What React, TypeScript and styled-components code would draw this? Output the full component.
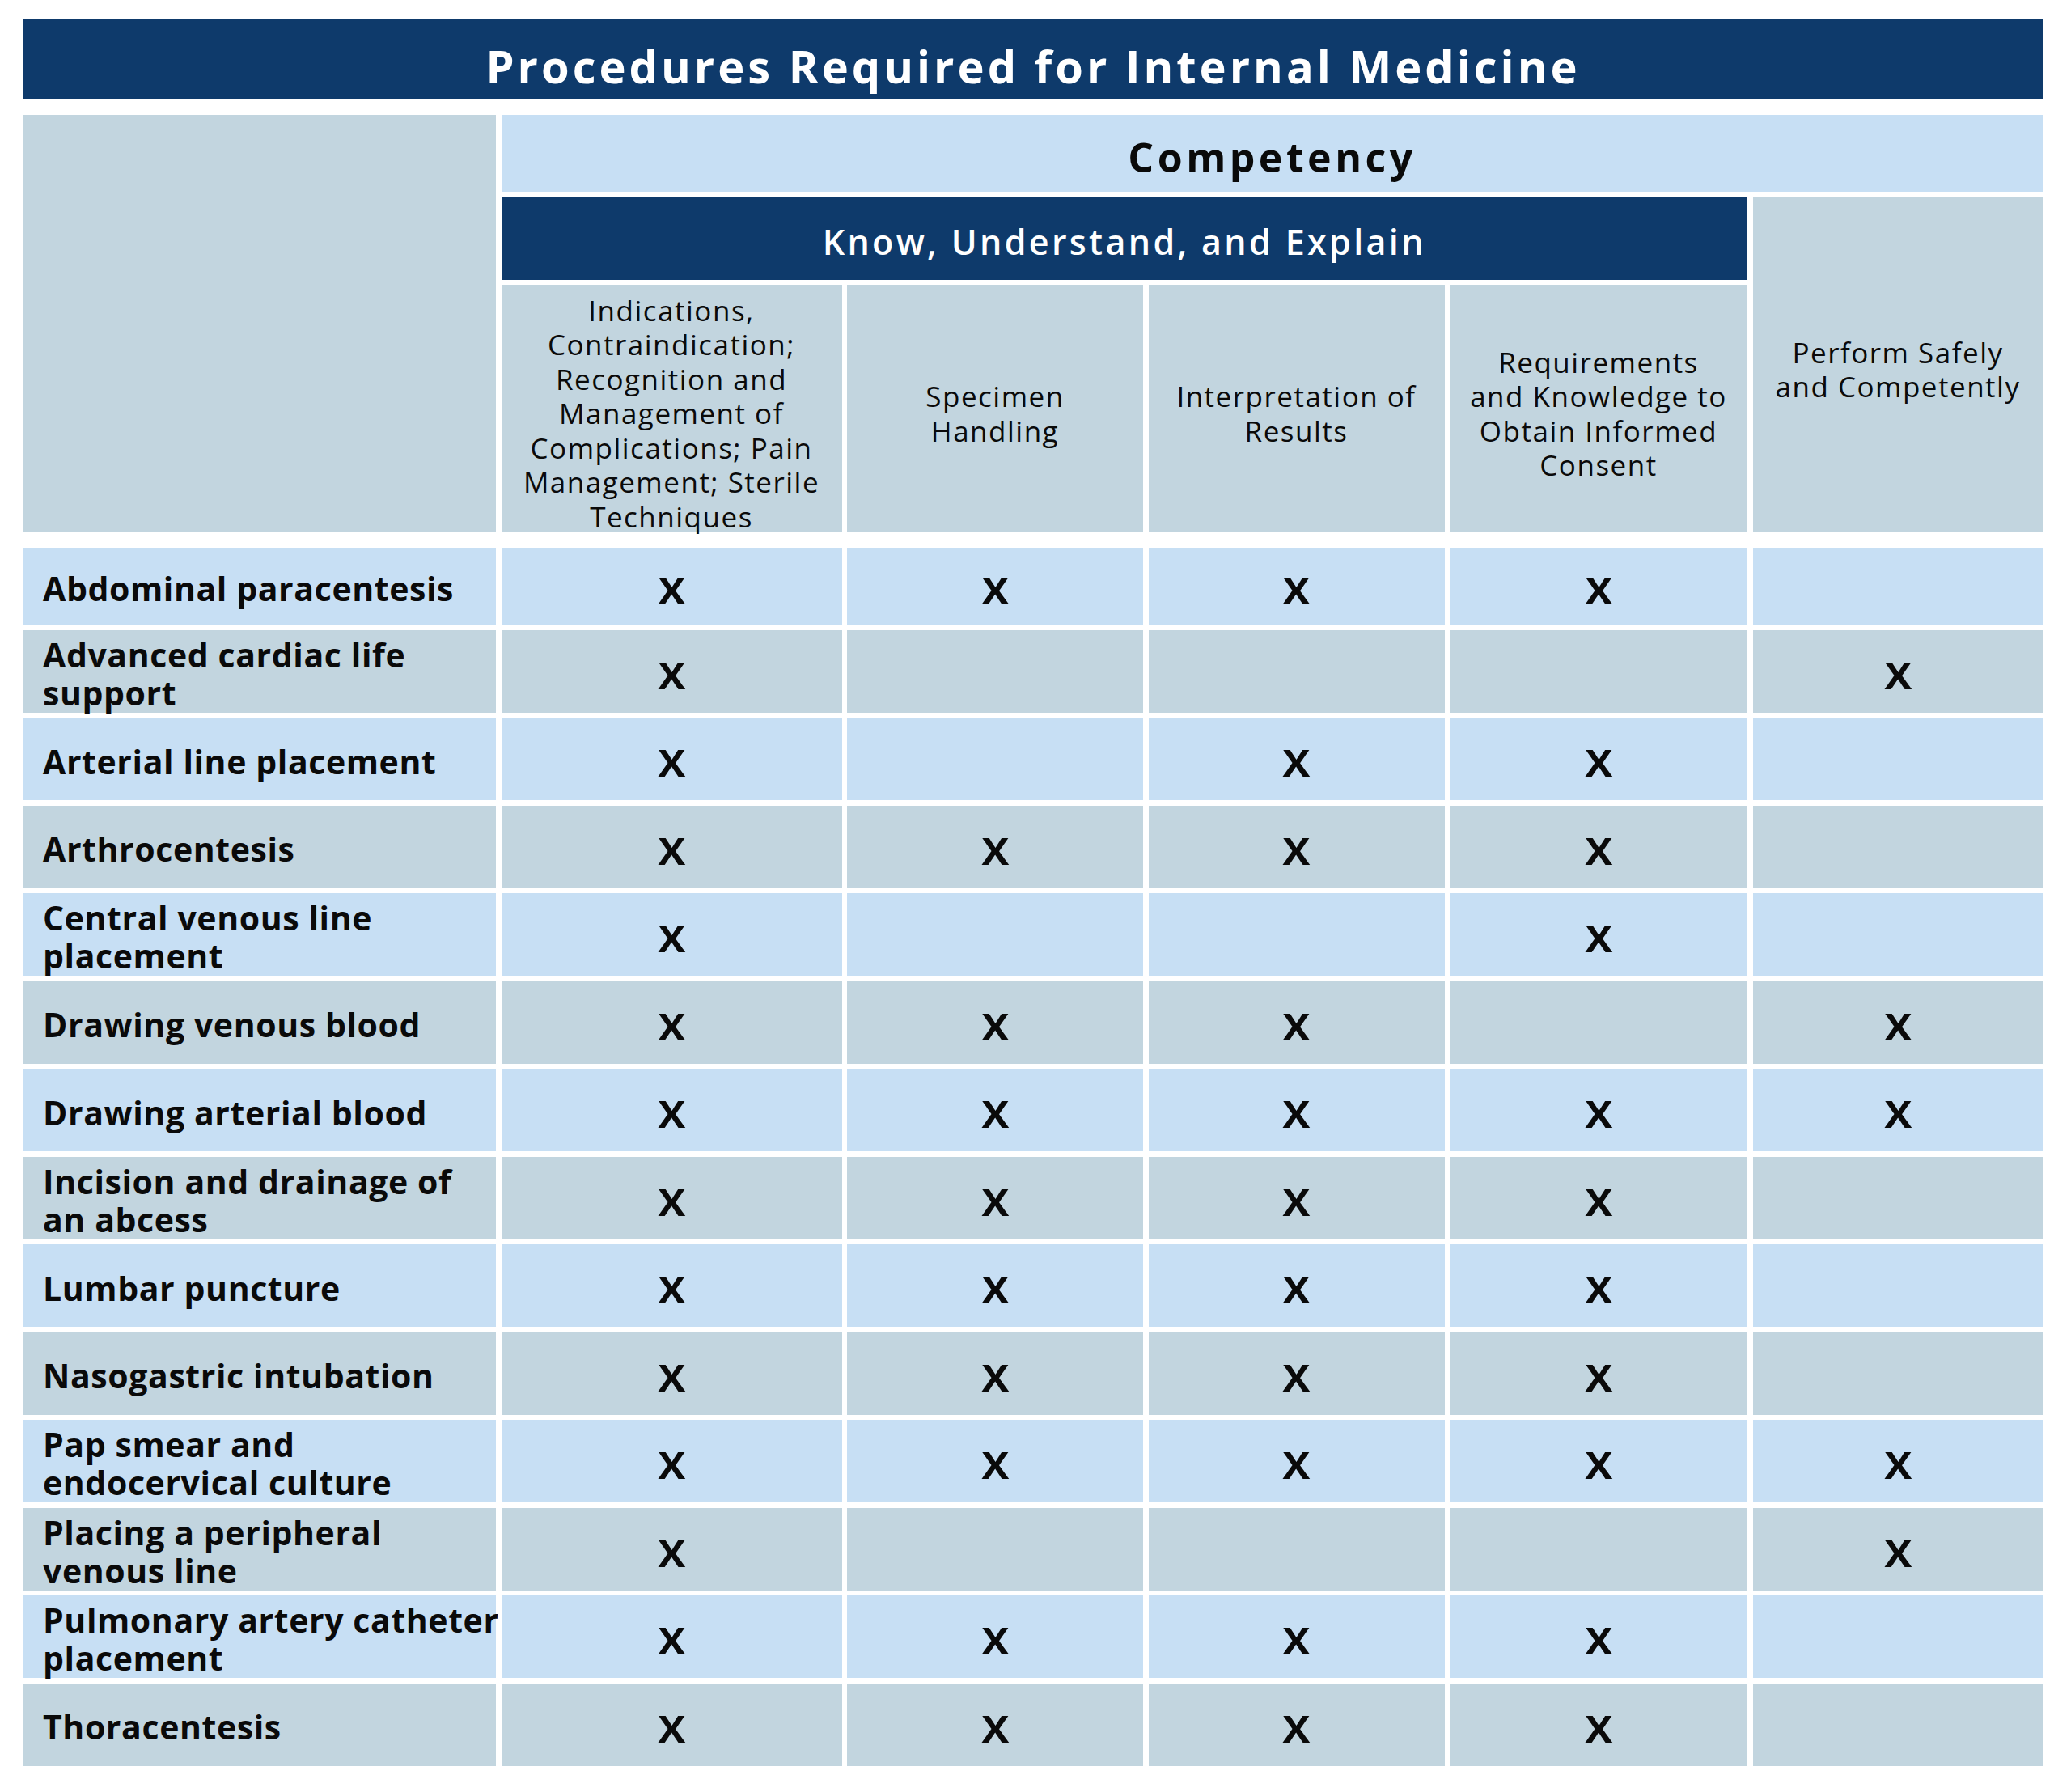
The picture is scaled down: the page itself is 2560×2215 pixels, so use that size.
import React from "react";
import styled, { createGlobalStyle, css } from "styled-components";

const NAVY = "#0e3a6b";
const LIGHT = "#c7dff4";
const GRAY = "#c2d5df";

const Global = createGlobalStyle`
  html, body { margin: 0; padding: 0; background: #ffffff; }
  body { font-family: "Open Sans", Lato, sans-serif; color: #0a0a0a; }
`;

const columns = css`
  display: grid;
  grid-template-columns: 584px 421px 366px 366px 368px 359px;
  column-gap: 6.5px;
`;

const Page = styled.div`
  width: 2560px;
  height: 2215px;
  box-sizing: border-box;
  padding: 24px 34px 0 28px;
  display: flex;
  flex-direction: column;
`;

const TitleBar = styled.h1`
  margin: 0;
  height: 98px;
  box-sizing: border-box;
  padding-top: 24px;
  background: ${NAVY};
  color: #ffffff;
  font-size: 56px;
  line-height: 67px;
  font-weight: 700;
  text-align: center;
  letter-spacing: 4px;
`;

const Header = styled.div`
  ${columns};
  margin: 20px 0 0 1px;
  grid-template-rows: 95px 103px 306px;
  row-gap: 6px;
`;

const Corner = styled.div`
  grid-column: 1;
  grid-row: 1 / 4;
  background: ${GRAY};
`;

const CompetencyCell = styled.div`
  grid-column: 2 / 7;
  grid-row: 1;
  background: ${LIGHT};
  box-sizing: border-box;
  padding-top: 22px;
  font-size: 50px;
  line-height: 60px;
  font-weight: 700;
  text-align: center;
  letter-spacing: 4.5px;
`;

const KnowCell = styled.div`
  grid-column: 2 / 6;
  grid-row: 2;
  background: ${NAVY};
  color: #ffffff;
  box-sizing: border-box;
  padding-top: 29px;
  font-size: 43px;
  line-height: 53px;
  font-weight: 600;
  text-align: center;
  letter-spacing: 3.35px;
`;

const SubHead = styled.div<{ $col: number; $span?: boolean }>`
  grid-column: ${(p) => p.$col};
  grid-row: ${(p) => (p.$span ? "2 / 4" : "3")};
  background: ${GRAY};
  display: flex;
  align-items: center;
  justify-content: center;
  padding-top: 13px;
  box-sizing: border-box;
  text-align: center;
  font-size: 35px;
  line-height: 42.4px;
  font-weight: 400;
  letter-spacing: 1.5px;
  white-space: nowrap;
`;

const Body = styled.div`
  display: flex;
  flex-direction: column;
  row-gap: 6.5px;
  margin: 19px 0 0 1px;
`;

const DataRow = styled.div<{ $tone: "light" | "gray"; $short?: boolean }>`
  ${columns};
  height: ${(p) => (p.$short ? 95 : 102)}px;
  --cell: ${(p) => (p.$tone === "light" ? LIGHT : GRAY)};
`;

const LabelCell = styled.div`
  background: var(--cell);
  display: flex;
  align-items: center;
  box-sizing: border-box;
  padding: 6px 0 0 24px;
  font-size: 41px;
  line-height: 47px;
  font-weight: 700;
  letter-spacing: 0.6px;
  white-space: nowrap;
`;

const MarkCell = styled.div`
  background: var(--cell);
  display: flex;
  align-items: center;
  justify-content: center;
  box-sizing: border-box;
  padding-top: 8px;
  font-size: 46px;
  line-height: 50px;
  font-weight: 700;
`;

const Mark = styled.span`
  display: inline-block;
  transform: scaleX(1.1);
`;

const subHeads: string[][] = [
  [
    "Indications,",
    "Contraindication;",
    "Recognition and",
    "Management of",
    "Complications; Pain",
    "Management; Sterile",
    "Techniques",
  ],
  ["Specimen", "Handling"],
  ["Interpretation of", "Results"],
  ["Requirements", "and Knowledge to", "Obtain Informed", "Consent"],
];

const rows: { label: string[]; marks: number[] }[] = [
  { label: ["Abdominal paracentesis"], marks: [1, 1, 1, 1, 0] },
  { label: ["Advanced cardiac life", "support"], marks: [1, 0, 0, 0, 1] },
  { label: ["Arterial line placement"], marks: [1, 0, 1, 1, 0] },
  { label: ["Arthrocentesis"], marks: [1, 1, 1, 1, 0] },
  { label: ["Central venous line", "placement"], marks: [1, 0, 0, 1, 0] },
  { label: ["Drawing venous blood"], marks: [1, 1, 1, 0, 1] },
  { label: ["Drawing arterial blood"], marks: [1, 1, 1, 1, 1] },
  { label: ["Incision and drainage of", "an abcess"], marks: [1, 1, 1, 1, 0] },
  { label: ["Lumbar puncture"], marks: [1, 1, 1, 1, 0] },
  { label: ["Nasogastric intubation"], marks: [1, 1, 1, 1, 0] },
  { label: ["Pap smear and", "endocervical culture"], marks: [1, 1, 1, 1, 1] },
  { label: ["Placing a peripheral", "venous line"], marks: [1, 0, 0, 0, 1] },
  { label: ["Pulmonary artery catheter", "placement"], marks: [1, 1, 1, 1, 0] },
  { label: ["Thoracentesis"], marks: [1, 1, 1, 1, 0] },
];

const Lines: React.FC<{ lines: string[] }> = ({ lines }) => (
  <div>
    {lines.map((l, i) => (
      <div key={i}>{l}</div>
    ))}
  </div>
);

export default function App() {
  return (
    <>
      <Global />
      <Page>
        <TitleBar>Procedures Required for Internal Medicine</TitleBar>
        <Header>
          <Corner />
          <CompetencyCell>Competency</CompetencyCell>
          <KnowCell>Know, Understand, and Explain</KnowCell>
          {subHeads.map((lines, i) => (
            <SubHead key={i} $col={i + 2}>
              <Lines lines={lines} />
            </SubHead>
          ))}
          <SubHead $col={6} $span>
            <Lines lines={["Perform Safely", "and Competently"]} />
          </SubHead>
        </Header>
        <Body>
          {rows.map((r, i) => (
            <DataRow key={i} $tone={i % 2 === 0 ? "light" : "gray"} $short={i === 0}>
              <LabelCell>
                <Lines lines={r.label} />
              </LabelCell>
              {r.marks.map((m, j) => (
                <MarkCell key={j}>{m ? <Mark>X</Mark> : null}</MarkCell>
              ))}
            </DataRow>
          ))}
        </Body>
      </Page>
    </>
  );
}
